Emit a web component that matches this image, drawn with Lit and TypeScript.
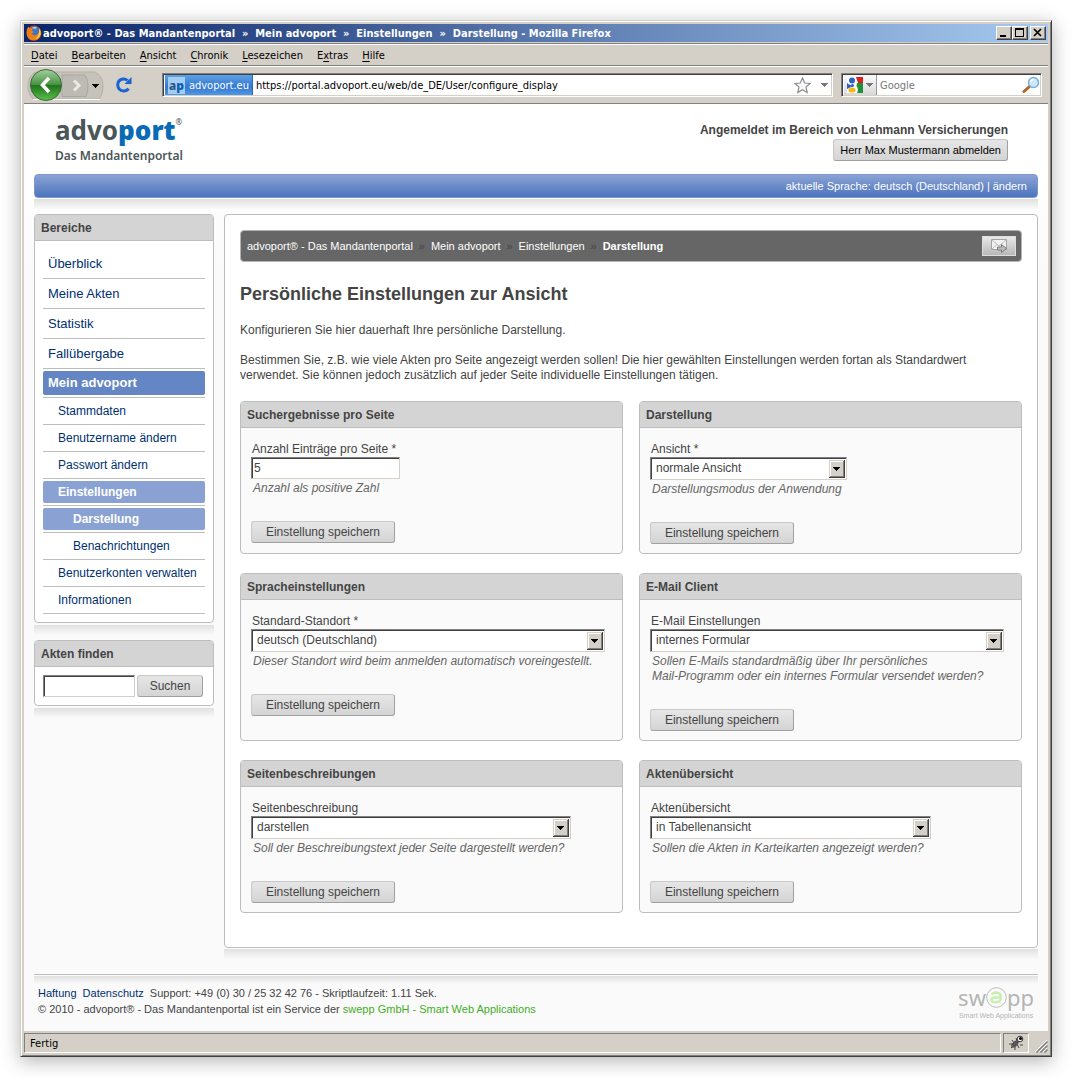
import { LitElement, html, css, svg } from "lit";
import { customElement, property } from "lit/decorators.js";
import { classMap } from "lit/directives/class-map.js";

interface NavItem {
  label: string;
  level: 0 | 1 | 2;
  active?: boolean;
}

interface Setting {
  id: string;
  title: string;
  label: string;
  value: string;
  hint: string[];
  kind: "text" | "select";
  size: "s" | "m" | "l" | "xl";
}

const MENU: [string, string, string][] = [
  ["", "D", "atei"],
  ["", "B", "earbeiten"],
  ["", "A", "nsicht"],
  ["", "C", "hronik"],
  ["", "L", "esezeichen"],
  ["E", "x", "tras"],
  ["", "H", "ilfe"],
];

const NAV: NavItem[] = [
  { label: "Überblick", level: 0 },
  { label: "Meine Akten", level: 0 },
  { label: "Statistik", level: 0 },
  { label: "Fallübergabe", level: 0 },
  { label: "Mein advoport", level: 0, active: true },
  { label: "Stammdaten", level: 1 },
  { label: "Benutzername ändern", level: 1 },
  { label: "Passwort ändern", level: 1 },
  { label: "Einstellungen", level: 1, active: true },
  { label: "Darstellung", level: 2, active: true },
  { label: "Benachrichtungen", level: 2 },
  { label: "Benutzerkonten verwalten", level: 1 },
  { label: "Informationen", level: 1 },
];

const SETTINGS: Setting[] = [
  { id: "count", title: "Suchergebnisse pro Seite", label: "Anzahl Einträge pro Seite *", value: "5", hint: ["Anzahl als positive Zahl"], kind: "text", size: "s" },
  { id: "view", title: "Darstellung", label: "Ansicht *", value: "normale Ansicht", hint: ["Darstellungsmodus der Anwendung"], kind: "select", size: "s" },
  { id: "locale", title: "Spracheinstellungen", label: "Standard-Standort *", value: "deutsch (Deutschland)", hint: ["Dieser Standort wird beim anmelden automatisch voreingestellt."], kind: "select", size: "xl" },
  { id: "mail", title: "E-Mail Client", label: "E-Mail Einstellungen", value: "internes Formular", hint: ["Sollen E-Mails standardmäßig über Ihr persönliches", "Mail-Programm oder ein internes Formular versendet werden?"], kind: "select", size: "xl" },
  { id: "description", title: "Seitenbeschreibungen", label: "Seitenbeschreibung", value: "darstellen", hint: ["Soll der Beschreibungstext jeder Seite dargestellt werden?"], kind: "select", size: "l" },
  { id: "files", title: "Aktenübersicht", label: "Aktenübersicht", value: "in Tabellenansicht", hint: ["Sollen die Akten in Karteikarten angezeigt werden?"], kind: "select", size: "m" },
];

const arrow = (color: string) => svg`<path d="M0 0h7v1h-1v1h-1v1h-1v1h-1v-1h-1v-1h-1v-1h-1z" fill=${color} />`;

const base = css`
  * {
    box-sizing: border-box;
  }
  button,
  input,
  select {
    font: inherit;
    margin: 0;
    border-radius: 0;
  }
  a {
    text-decoration: none;
  }
  svg {
    display: block;
    flex: none;
  }
  .action {
    height: 22px;
    padding: 0 11px;
    color: #444;
    background: linear-gradient(#e6e6e6, #d4d4d4);
    border: 1px solid #c8c8c8;
    border-right-color: #a0a0a0;
    border-bottom-color: #a0a0a0;
    border-radius: 3px;
    font-size: 12px;
    white-space: nowrap;
  }
  .sunken {
    background: #fff;
    border: 1px solid;
    border-color: #808080 #d4d0c8 #d4d0c8 #808080;
    box-shadow: inset 1px 1px #404040;
    color: #444;
  }
`;

@customElement("browser-chrome")
class BrowserChrome extends LitElement {
  static styles = [
    base,
    css`
      :host {
        display: block;
        font: 11px "DejaVu Sans Condensed", "DejaVu Sans", sans-serif;
        color: #000;
      }
      .title {
        display: flex;
        align-items: center;
        gap: 1px;
        height: 18px;
        padding: 0 2px;
        background: linear-gradient(90deg, #0a246a, #a6caf0);
        color: #fff;
        font-weight: bold;
      }
      .caption {
        flex: 1;
        min-width: 0;
        overflow: hidden;
        white-space: pre;
      }
      .win {
        display: grid;
        place-items: center;
        width: 16px;
        height: 14px;
        padding: 0;
        background: #d4d0c8;
        border: 1px solid;
        border-color: #fff #404040 #404040 #fff;
        box-shadow: inset -1px -1px #808080;
      }
      .win.close {
        margin-left: 1px;
      }
      .group {
        display: flex;
      }
      .menu {
        display: flex;
        align-items: center;
        gap: 14px;
        height: 22px;
        margin-top: 1px;
        padding: 1px 7px 0;
        border-top: 1px solid #808080;
        box-shadow: inset 0 1px #fff;
      }
      .menu button {
        padding: 0;
        border: 0;
        background: none;
        color: inherit;
      }
      .menu u {
        text-underline-offset: 2px;
      }
      .tools {
        display: flex;
        align-items: center;
        height: 39px;
        padding: 0 6px 0 3px;
        border-top: 1px solid #808080;
        border-bottom: 1px solid #808080;
        box-shadow: inset 0 1px #fff;
      }
      .nav,
      .reload {
        padding: 0;
        border: 0;
        background: none;
      }
      .reload {
        margin: 0 29px 0 11px;
      }
      .bar {
        display: flex;
        align-items: center;
        height: 24px;
        border: 1px solid;
        border-color: #808080 #fff #fff #808080;
        box-shadow: inset 1px 1px #404040, inset -1px -1px #d4d0c8;
        background: #fff;
        padding: 2px 1px 1px 2px;
      }
      .address {
        flex: 1;
        min-width: 0;
        padding-right: 4px;
      }
      .site {
        display: flex;
        align-items: center;
        gap: 4px;
        height: 20px;
        padding: 0 3px 0 3px;
        background: linear-gradient(#5ba2e6, #3478d0 60%, #4f97e4);
        border-right: 1px solid #2f68b4;
        color: #fff;
      }
      .tile {
        padding: 1px;
        background: #a3cdf3;
        color: #24507d;
        font: bold 12px "Noto Sans", sans-serif;
        line-height: 15px;
      }
      .tile b {
        color: #0a5fb4;
      }
      .bar input {
        flex: 1;
        min-width: 0;
        padding: 0 3px;
        border: 0;
        outline: 0;
        background: none;
      }
      .star {
        margin-right: 10px;
      }
      .search {
        width: 201px;
        margin-left: 8px;
      }
      .search input::placeholder {
        color: #777;
        opacity: 1;
      }
      .engine {
        display: flex;
        align-items: center;
        gap: 3px;
        height: 20px;
        padding: 0 3px;
        border: 0;
        border-right: 1px solid #999;
        background: linear-gradient(#fafafa, #d8d8d8);
      }
    `,
  ];

  render() {
    return html`
      <div class="title">
        <svg width="16" height="16" viewBox="0 0 16 16">
          <circle cx="8" cy="8" r="7.5" fill="#c8430c" />
          <circle cx="8.6" cy="6.6" r="5.2" fill="#3a78c8" />
          <path d="M6 2.5q3-1.5 5 0q-1 1.500-3 1.500z" fill="#9fd0f4" />
          <path d="M1 4q1-2 2-2.500q0 1.500.6 2q2-1 3.400.4q-1.600.8-1.400 2.200q1.600.2 2 .8q-.6 1.400-2 1.600q1 2 4 1.600q4-.8 4-5.600q2 3 1 6q-1.600 5-6.600 5q-6 0-7.200-5.500q-.5-3 .2-6z" fill="#ee7f18" />
          <path d="M13 3q2.500 3 1.600 6.500q-1.600 4-5.600 4.500q4.800-3 4-11z" fill="#fbd04c" />
        </svg>
        <span class="caption">advoport® - Das Mandantenportal  »  Mein advoport  »  Einstellungen  »  Darstellung - Mozilla Firefox</span>
        <span class="group">
          <button class="win" aria-label="Minimieren">
            <svg width="14" height="12" viewBox="0 0 14 12"><path d="M3 8h6v2h-6z" /></svg>
          </button>
          <button class="win" aria-label="Maximieren">
            <svg width="14" height="12" viewBox="0 0 14 12"><path d="M2 1h9v9h-9zM3 3v6h7v-6z" fill-rule="evenodd" /></svg>
          </button>
        </span>
        <button class="win close" aria-label="Schließen">
          <svg width="14" height="12" viewBox="0 0 14 12"><path d="M3 2l7 7M10 2l-7 7" stroke="#000" stroke-width="1.700" /></svg>
        </button>
      </div>
      <div class="menu">${MENU.map(([a, b, c]) => html`<button>${a}<u>${b}</u>${c}</button>`)}</div>
      <div class="tools">
        <button class="nav" aria-label="Zurück">
          <svg width="77" height="34" viewBox="0 0 77 34">
            <defs>
              <linearGradient id="green" x1="0" y1="0" x2="0" y2="1">
                <stop offset="0" stop-color="#a5cf9f" />
                <stop offset=".48" stop-color="#4a9444" />
                <stop offset=".52" stop-color="#1f741c" />
                <stop offset="1" stop-color="#5cc14a" />
              </linearGradient>
            </defs>
            <path d="M8 4h60q8 4 8 14q0 9-4 13h-66q-5-5-5-13q0-9 7-14z" fill="#c6c2ba" stroke="#b4b0a8" />
            <path d="M6 31.500h67" stroke="#fff" />
            <path d="M35 7h23q3 4 3 10.500q0 7-2 11h-24z" fill="#bdbab3" stroke="#aba8a1" />
            <path d="M47 12.500l5 5l-5 5" fill="none" stroke="#ebe9e5" stroke-width="3" />
            <circle cx="19" cy="17" r="15.500" fill="url(#green)" stroke="#3d6b3a" />
            <path d="M22 10l-6.500 7l6.500 7" fill="none" stroke="#fff" stroke-width="3.500" />
            <g transform="translate(65 16)">${arrow("#000")}</g>
          </svg>
        </button>
        <button class="reload" aria-label="Neu laden">
          <svg width="18" height="18" viewBox="0 0 18 18">
            <path d="M12.500 4.500q-2-1.800-4.500-1.500q-5.200.8-5.300 6q.3 5.500 6 6q3 0 5-2.300" fill="none" stroke="#1b63d2" stroke-width="3" />
            <path d="M16.500 1v7h-7z" fill="#1b63d2" />
          </svg>
        </button>
        <div class="bar address">
          <span class="site"><span class="tile">a<b>p</b></span>advoport.eu</span>
          <input aria-label="Adresse" value="https://portal.advoport.eu/web/de_DE/User/configure_display" />
          <svg class="star" width="17" height="17" viewBox="0 0 17 17">
            <path d="M8.500 1l2.200 5l5.300.5l-4 3.600l1.200 5.400l-4.700-2.800l-4.700 2.800l1.200-5.400l-4-3.600l5.300-.5z" fill="#fdfdfd" stroke="#8c8c8c" stroke-width="1.200" />
          </svg>
          <svg width="7" height="4" viewBox="0 0 7 4">${arrow("#777")}</svg>
        </div>
        <div class="bar search">
          <button class="engine" aria-label="Suchmaschine">
            <svg width="16" height="16" viewBox="0 0 16 16">
              <path d="M0 0h16v16h-16z" fill="#fff" />
              <path d="M9 0h7v6h-5z" fill="#e01c1c" />
              <path d="M10 6h6v10h-6q2-4-.5-7z" fill="#1d9038" />
              <path d="M0 6l3 2l3 1l-6 3z" fill="#2a62c8" />
              <circle cx="5" cy="3.500" r="3" fill="#2a62c8" />
              <circle cx="5.500" cy="8.500" r="1.500" fill="#2a62c8" />
              <ellipse cx="5" cy="13" rx="3.600" ry="2.600" fill="#f6b51b" />
            </svg>
            <svg width="7" height="4" viewBox="0 0 7 4">${arrow("#777")}</svg>
          </button>
          <input aria-label="Suche" placeholder="Google" />
          <svg width="18" height="18" viewBox="0 0 18 18">
            <path d="M7.500 10.500l-5.500 5" stroke="#b0652c" stroke-width="3" stroke-linecap="round" />
            <circle cx="11.500" cy="6.500" r="5" fill="#cfe9fb" stroke="#7aaedb" stroke-width="1.500" />
            <path d="M8.500 6q.5-2.500 3-2.500" fill="none" stroke="#fff" stroke-width="1.500" />
          </svg>
        </div>
      </div>
    `;
  }
}

@customElement("side-nav")
class SideNav extends LitElement {
  static styles = [
    base,
    css`
      :host {
        display: block;
      }
      .box {
        background: #fff;
        border: 1px solid #bdbdbd;
        border-radius: 4px;
        overflow: hidden;
      }
      .fade {
        height: 10px;
        margin: 2px 0 5px;
        background: linear-gradient(#e0e0e0, #fafafa);
      }
      h2 {
        height: 26px;
        margin: 0;
        padding: 0 6px;
        background: #d4d4d4;
        border-bottom: 1px solid #bdbdbd;
        font-size: 12px;
        line-height: 26px;
      }
      ul {
        margin: 0;
        padding: 8px;
        list-style: none;
      }
      li {
        display: flex;
        align-items: center;
        height: 27px;
        padding: 2px 0;
        border-bottom: 1px solid #bdbdbd;
      }
      li.top {
        height: 30px;
        font-size: 13px;
      }
      li.top.active {
        height: 29px;
      }
      a {
        flex: 1;
        padding-left: 5px;
        color: #003070;
        border-radius: 2px;
        line-height: 22px;
        white-space: nowrap;
      }
      .top a {
        line-height: 24px;
      }
      .sub a {
        padding-left: 15px;
      }
      .deep a {
        padding-left: 30px;
      }
      .active a {
        background: #8aa2d3;
        color: #fff;
        font-weight: bold;
      }
      .top.active a {
        background: #6486c4;
      }
      form {
        display: flex;
        gap: 2px;
        padding: 8px;
      }
      .find {
        flex: 1;
        min-width: 0;
        height: 22px;
      }
      .action {
        min-width: 66px;
        margin-right: 2px;
      }
    `,
  ];

  render() {
    return html`
      <nav class="box">
        <h2>Bereiche</h2>
        <ul>
          ${NAV.map(
            (item) => html`<li class=${classMap({ top: item.level === 0, sub: item.level === 1, deep: item.level === 2, active: !!item.active })}>
              <a href="#">${item.label}</a>
            </li>`
          )}
        </ul>
      </nav>
      <div class="fade"></div>
      <section class="box">
        <h2>Akten finden</h2>
        <form>
          <input class="find sunken" aria-label="Akten finden" />
          <button class="action" type="button">Suchen</button>
        </form>
      </section>
      <div class="fade"></div>
    `;
  }
}

@customElement("setting-card")
class SettingCard extends LitElement {
  @property({ attribute: false }) setting!: Setting;

  static styles = [
    base,
    css`
      :host {
        display: block;
        background: #fafafa;
        border: 1px solid #bdbdbd;
        border-radius: 4px;
        overflow: hidden;
      }
      h2 {
        height: 26px;
        margin: 0;
        padding: 0 6px;
        background: #d4d4d4;
        border-bottom: 1px solid #bdbdbd;
        font-size: 12px;
        line-height: 26px;
      }
      form {
        display: flex;
        flex-direction: column;
        align-items: flex-start;
        padding: 14px 10px 9px;
      }
      label {
        padding: 0 1px;
      }
      .text {
        width: 149px;
        height: 22px;
        padding: 0 2px;
      }
      .pick {
        position: relative;
        max-width: 100%;
      }
      .s {
        width: 197px;
      }
      .m {
        width: 281px;
      }
      .l {
        width: 320px;
      }
      .xl {
        width: 354px;
      }
      select {
        display: block;
        appearance: none;
        width: 100%;
        height: 23px;
        padding: 0 24px 0 5px;
      }
      .pick svg {
        position: absolute;
        top: 3px;
        right: 2px;
        pointer-events: none;
      }
      .hint {
        margin: 2px 0 25px;
        padding: 0 2px;
        color: #666;
        font-style: italic;
      }
      .hint span {
        display: block;
      }
      .action {
        min-width: 144px;
      }
    `,
  ];

  render() {
    const s = this.setting;
    return html`
      <h2>${s.title}</h2>
      <form>
        <label for=${s.id}>${s.label}</label>
        ${s.kind === "text"
          ? html`<input class="text sunken" id=${s.id} .value=${s.value} />`
          : html`<div class=${classMap({ pick: true, [s.size]: true })}>
              <select class="sunken" id=${s.id}>
                <option>${s.value}</option>
              </select>
              <svg width="16" height="18" viewBox="0 0 16 18">
                <path d="M0 0h16v18h-16z" fill="#404040" />
                <path d="M0 0h15v17h-15z" fill="#d4d0c8" />
                <path d="M1 1h14v16h-14z" fill="#808080" />
                <path d="M1 1h13v15h-13z" fill="#fff" />
                <path d="M2 2h12v14h-12z" fill="#d4d0c8" />
                <g transform="translate(4 7)">${arrow("#000")}</g>
              </svg>
            </div>`}
        <div class="hint">${s.hint.map((line) => html`<span>${line}</span>`)}</div>
        <button class="action" type="button">Einstellung speichern</button>
      </form>
    `;
  }
}

@customElement("app-root")
class AppRoot extends LitElement {
  static styles = [
    base,
    css`
      :host {
        display: flex;
        flex-direction: column;
        box-sizing: border-box;
        min-height: 100vh;
        padding: 20px;
        background: #fff;
        color: #444;
        font: 12px/15px "Liberation Sans", Arial, sans-serif;
      }
      .window {
        flex: 1;
        display: flex;
        flex-direction: column;
        padding: 3px;
        background: #d4d0c8;
        border: 1px solid;
        border-color: #d4d0c8 #404040 #404040 #d4d0c8;
        box-shadow: inset 1px 1px #fff, inset -1px -1px #808080, 0 4px 18px rgba(0, 0, 0, 0.3);
      }
      .page {
        flex: 1;
        padding: 0 10px;
        background: linear-gradient(#fff 70px, #fafafa 160px);
      }
      header {
        display: flex;
        justify-content: space-between;
        align-items: flex-start;
        height: 70px;
        padding: 8px 30px 0 21px;
      }
      .logo {
        display: flex;
        flex-direction: column;
        font-family: "Noto Sans", sans-serif;
        font-weight: 600;
        color: #4a5658;
      }
      .word {
        display: flex;
        align-items: flex-start;
        font-size: 26px;
        font-weight: 700;
        line-height: 36px;
      }
      .word b {
        color: #0a6ab6;
      }
      .word small {
        font-size: 8px;
        font-weight: 400;
        line-height: 20px;
      }
      .tagline {
        font-size: 12px;
        line-height: 16px;
      }
      .account {
        display: flex;
        flex-direction: column;
        align-items: flex-end;
        gap: 1px;
        padding-top: 11px;
      }
      .account .action {
        padding: 0 6px;
        color: #000;
        font-size: 11px;
      }
      .language {
        display: flex;
        justify-content: flex-end;
        align-items: center;
        gap: 3px;
        height: 24px;
        padding: 0 10px;
        background: linear-gradient(#8ba3d4, #4c74bd);
        border: 1px solid #7d99d0;
        border-radius: 4px;
        color: #fff;
        font-size: 11px;
      }
      .language a {
        color: inherit;
      }
      .fade {
        height: 10px;
        margin-top: 1px;
        background: linear-gradient(#e0e0e0, #fafafa);
      }
      .columns {
        display: grid;
        grid-template-columns: 180px minmax(0, 1fr);
        align-items: start;
        gap: 10px;
        padding-top: 5px;
      }
      main {
        padding: 15px 15px 34px;
        background: #fff;
        border: 1px solid #bdbdbd;
        border-radius: 4px;
      }
      .crumbs {
        display: flex;
        align-items: center;
        height: 32px;
        padding: 0 5px 0 6px;
        background: #666;
        border: 1px solid #b4b4b4;
        border-radius: 4px;
        color: #fff;
        font-size: 11px;
      }
      .crumbs a {
        color: inherit;
      }
      .crumbs i {
        width: 18px;
        color: #444;
        font-style: normal;
        text-align: center;
      }
      .send {
        display: grid;
        place-items: center;
        width: 34px;
        height: 20px;
        margin-left: auto;
        padding: 0;
        border: 1px solid #ddd;
        background: linear-gradient(#e8e8e8, #b8b8b8);
      }
      h1 {
        margin: 20px 0 17px;
        font-size: 18px;
        line-height: 24px;
      }
      p {
        margin: 0 0 15px;
      }
      .cards {
        display: grid;
        grid-template-columns: repeat(2, minmax(0, 1fr));
        gap: 19px 16px;
        padding-top: 3px;
      }
      footer {
        display: flex;
        justify-content: space-between;
        padding: 0 4px 10px;
        font-size: 11px;
        line-height: 16px;
      }
      .legal {
        padding-top: 1px;
      }
      .rule {
        margin-top: 15px;
        padding-top: 1px;
        border-top: 1px solid #bdbdbd;
      }
      .rule .fade {
        height: 8px;
        margin: 0;
      }
      footer a {
        color: #003070;
        margin-right: 3px;
      }
      footer .maker {
        margin: 0;
        color: #3fae1c;
      }
      .swepp {
        display: flex;
        flex-direction: column;
        align-items: center;
        gap: 2px;
        color: #b4b4b4;
        font-size: 7px;
        line-height: 8px;
      }
      .mark {
        display: flex;
        align-items: center;
        font: 22px/26px "Noto Sans", sans-serif;
      }
      .status {
        display: flex;
        gap: 2px;
        margin-top: 2px;
        color: #000;
        font: 11px "DejaVu Sans Condensed", sans-serif;
      }
      .pane {
        display: flex;
        align-items: center;
        height: 20px;
        padding: 0 4px;
        border: 1px solid;
        border-color: #808080 #fff #fff #808080;
      }
      .pane.wide {
        flex: 1;
        padding: 0 5px;
      }
      .grip {
        align-self: flex-end;
        margin-left: 3px;
      }
    `,
  ];

  render() {
    return html`
      <div class="window">
        <browser-chrome></browser-chrome>
        <div class="page">
          <header>
            <div class="logo">
              <span class="word"><span>advo</span><b>port</b><small>®</small></span>
              <span class="tagline">Das Mandantenportal</span>
            </div>
            <div class="account">
              <strong>Angemeldet im Bereich von Lehmann Versicherungen</strong>
              <button class="action">Herr Max Mustermann abmelden</button>
            </div>
          </header>
          <div class="language">aktuelle Sprache: deutsch (Deutschland) <span>|</span> <a href="#">ändern</a></div>
          <div class="fade"></div>
          <div class="columns">
            <side-nav></side-nav>
            <div>
              <main>
                <nav class="crumbs">
                  ${["advoport® - Das Mandantenportal", "Mein advoport", "Einstellungen"].map((c) => html`<a href="#">${c}</a><i>»</i>`)}
                  <b>Darstellung</b>
                  <button class="send" aria-label="Seite versenden">
                    <svg width="17" height="14" viewBox="0 0 17 14">
                      <path d="M.5.500h15v10h-15z" fill="#f2f2f2" stroke="#a4a4a4" />
                      <path d="M1 1l7 6l7-6M1 10l5-4.500M15 10l-5-4.500" fill="none" stroke="#b8b8b8" />
                      <path d="M6.500 8h4v-2.500l5 4l-5 4v-2.500h-4z" fill="#bbb" stroke="#7c7c7c" />
                    </svg>
                  </button>
                </nav>
                <h1>Persönliche Einstellungen zur Ansicht</h1>
                <p>Konfigurieren Sie hier dauerhaft Ihre persönliche Darstellung.</p>
                <p>
                  Bestimmen Sie, z.B. wie viele Akten pro Seite angezeigt werden sollen! Die hier gewählten Einstellungen werden
                  fortan als Standardwert verwendet. Sie können jedoch zusätzlich auf jeder Seite individuelle Einstellungen
                  tätigen.
                </p>
                <div class="cards">${SETTINGS.map((s) => html`<setting-card .setting=${s}></setting-card>`)}</div>
              </main>
              <div class="fade"></div>
            </div>
          </div>
          <div class="rule"><div class="fade"></div></div>
          <footer>
            <div class="legal">
              <div><a href="#">Haftung</a> <a href="#">Datenschutz</a> Support: +49 (0) 30 / 25 32 42 76 - Skriptlaufzeit: 1.11 Sek.</div>
              <div>
                © 2010 - advoport® - Das Mandantenportal ist ein Service der
                <a class="maker" href="#">swepp GmbH - Smart Web Applications</a>
              </div>
            </div>
            <div class="swepp">
              <span class="mark">
                sw<svg width="21" height="21" viewBox="0 0 21 21">
                  <circle cx="10.500" cy="10.500" r="9.800" fill="none" stroke="#bbb" />
                  <path d="M6 7.500q1-2 4-2q5 .3 5 5q-.3 4.700-5 4.800q-4.500 0-4.500-2.600q.2-2.200 3.500-2.200h5.500" fill="none" stroke="#c6f0ae" stroke-width="2.500" />
                </svg>pp
              </span>
              <span>Smart Web Applications</span>
            </div>
          </footer>
        </div>
        <div class="status">
          <div class="pane wide">Fertig</div>
          <div class="pane">
            <svg width="16" height="16" viewBox="0 0 16 16">
              <path d="M1 9h4M3 13l3-3M7 15v-4M11 13l-2-4M4 5l2 3M8 3l1 3M12 10h3" stroke="#444" />
              <ellipse cx="7" cy="9" rx="4.500" ry="2.600" transform="rotate(-45 7 9)" fill="#555" />
              <circle cx="12" cy="4" r="2.800" fill="#fff" stroke="#333" />
              <circle cx="12.500" cy="3.500" r="1.500" />
            </svg>
          </div>
          <svg class="grip" width="14" height="14" viewBox="0 0 14 14">
            <path d="M1 13l12-12M5 13l8-8M9 13l4-4" stroke="#fff" />
            <path d="M2.500 13.500l11-11M6.500 13.500l7-7M10.500 13.500l3-3" stroke="#808080" stroke-width="1.500" />
          </svg>
        </div>
      </div>
    `;
  }
}
